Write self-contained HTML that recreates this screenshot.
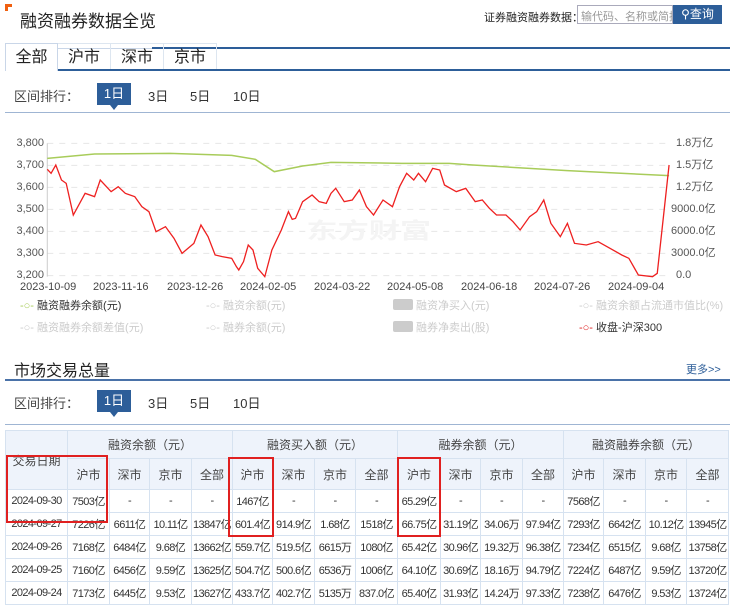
<!DOCTYPE html>
<html><head><meta charset="utf-8">
<style>
*{margin:0;padding:0;box-sizing:border-box}
body{width:740px;height:599px;overflow:hidden;background:#fff;font-family:"Liberation Sans","Noto Sans CJK SC",sans-serif;color:#333;position:relative}
.a{position:absolute;white-space:nowrap}
.btn1{position:absolute;background:#2d5e99;color:#fff;width:34px;height:22px;text-align:center;line-height:22px;font-size:13px}
.btn1:after{content:"";position:absolute;left:13px;bottom:-5px;border-left:4px solid transparent;border-right:4px solid transparent;border-top:5px solid #2d5e99}
.f13{font-size:13px}
table{position:absolute;left:5px;top:430px;border-collapse:collapse;font-size:11px;table-layout:fixed;width:723px}
td{border:1px solid #d6e2f0;text-align:center;height:23px;color:#333;padding:0;white-space:nowrap;overflow:hidden;letter-spacing:-0.6px}
tr.h td{background:#eef3fb;color:#444;font-size:12px;letter-spacing:0}
.rb{position:absolute;border:2px solid #e02020}
.lg{font-size:11px;color:#ccc}
</style></head><body>
<div class="a" style="left:5px;top:4px;width:7px;height:7px;border-left:3px solid #f06010;border-top:3px solid #f06010"></div>
<div class="a" style="left:20px;top:7px;font-size:17px;color:#222">融资融券数据全览</div>
<div class="a" style="left:5px;top:48px;width:147px;height:1px;background:#c9d6e8"></div>
<div class="a" style="left:152px;top:47px;width:578px;height:2px;background:#2d5e99"></div>
<div class="a" style="left:484px;top:9px;font-size:11px;color:#222">证券融资融券数据：</div>
<div class="a" style="left:577px;top:5px;width:96px;height:19px;border:1px solid #aab;font-size:11px;color:#999;padding:2px 3px;overflow:hidden">输代码、名称或简拼</div>
<div class="a" style="left:673px;top:5px;width:49px;height:19px;background:#2d5e99;color:#fff;font-size:12px;line-height:19px;text-align:center">&#9906;查询</div>
<div class="a" style="left:5px;top:43px;width:53px;height:28px;border:1px solid #c9d6e8;border-bottom:none;background:#fff;z-index:2;font-size:16px;text-align:center;line-height:27px;color:#222">全部</div>
<div class="a" style="left:58px;top:43px;width:53px;height:27px;border:1px solid #dde6f0;border-left:none;font-size:16px;text-align:center;line-height:27px;color:#222">沪市</div>
<div class="a" style="left:111px;top:43px;width:53px;height:27px;border:1px solid #dde6f0;border-left:none;font-size:16px;text-align:center;line-height:27px;color:#222">深市</div>
<div class="a" style="left:164px;top:43px;width:53px;height:27px;border:1px solid #dde6f0;border-left:none;font-size:16px;text-align:center;line-height:27px;color:#222">京市</div>
<div class="a" style="left:58px;top:69px;width:672px;height:2px;background:#2d5e99"></div>
<div class="a f13" style="left:14px;top:86px;color:#444">区间排行：</div>
<div class="btn1" style="left:97px;top:83px">1日</div>
<div class="a f13" style="left:148px;top:86px">3日</div>
<div class="a f13" style="left:190px;top:86px">5日</div>
<div class="a f13" style="left:233px;top:86px">10日</div>
<div class="a" style="left:5px;top:112px;width:725px;height:1px;background:#9fb5d3"></div>

<svg class="a" style="left:0;top:130px" width="740" height="160" viewBox="0 0 1565 480" preserveAspectRatio="none">
<g stroke="#e6e6e6" stroke-dasharray="6,6">
<line x1="100" x2="1415" y1="40" y2="40" vector-effect="non-scaling-stroke"/><line x1="100" x2="1415" y1="106" y2="106" vector-effect="non-scaling-stroke"/><line x1="100" x2="1415" y1="172" y2="172" vector-effect="non-scaling-stroke"/><line x1="100" x2="1415" y1="238" y2="238" vector-effect="non-scaling-stroke"/><line x1="100" x2="1415" y1="304" y2="304" vector-effect="non-scaling-stroke"/><line x1="100" x2="1415" y1="370" y2="370" vector-effect="non-scaling-stroke"/><line x1="100" x2="1415" y1="437" y2="437" vector-effect="non-scaling-stroke"/>
</g>
<line x1="100" x2="100" y1="40" y2="440" stroke="#ccc" vector-effect="non-scaling-stroke"/>
<text x="780" y="325" font-size="66" fill="#f4f4f4" text-anchor="middle" font-family="Noto Sans CJK SC,sans-serif" font-weight="bold">东方财富</text>
<polyline fill="none" stroke="#a8cc5a" stroke-width="1.5" vector-effect="non-scaling-stroke" points="100,85 200,72 360,70 490,76 540,88 580,125 640,108 700,97 850,100 950,100 1000,105 1200,122 1415,137"/>
<polyline fill="none" stroke="#ee2020" stroke-width="1.3" vector-effect="non-scaling-stroke" points="100,118 108,130 118,105 130,150 140,160 155,255 180,190 200,200 212,150 235,185 250,170 265,190 285,200 300,230 315,245 330,305 350,290 368,325 385,370 410,340 425,285 440,320 455,375 470,380 490,385 500,410 505,420 515,395 525,345 535,360 545,415 560,440 575,360 595,300 610,245 618,268 625,265 640,215 660,195 675,215 690,220 700,190 710,175 728,215 745,210 760,180 775,230 790,255 810,210 830,230 845,170 860,130 875,150 885,130 900,155 915,115 930,120 940,165 965,185 985,175 1005,215 1020,210 1035,235 1050,255 1070,255 1085,275 1100,300 1120,260 1135,245 1150,210 1165,280 1185,320 1200,280 1215,340 1240,345 1265,335 1290,355 1315,375 1330,385 1350,435 1380,440 1390,430 1400,300 1415,105"/>
</svg>
<div class="a" style="left:0;top:130px;width:44px;font-size:11px;color:#555;text-align:right;line-height:14px">
<div style="position:absolute;right:0;top:6px">3,800</div><div style="position:absolute;right:0;top:28px">3,700</div><div style="position:absolute;right:0;top:50px">3,600</div><div style="position:absolute;right:0;top:72px">3,500</div><div style="position:absolute;right:0;top:94px">3,400</div><div style="position:absolute;right:0;top:116px">3,300</div><div style="position:absolute;right:0;top:138px">3,200</div></div>
<div class="a" style="left:676px;top:130px;font-size:11px;color:#555;line-height:14px">
<div style="position:absolute;left:0;top:6px">1.8万亿</div><div style="position:absolute;left:0;top:28px">1.5万亿</div><div style="position:absolute;left:0;top:50px">1.2万亿</div><div style="position:absolute;left:-5px;top:72px">9000.0亿</div><div style="position:absolute;left:-5px;top:94px">6000.0亿</div><div style="position:absolute;left:-5px;top:116px">3000.0亿</div><div style="position:absolute;left:0;top:138px">0.0</div></div>
<div class="a" style="left:20px;top:281px;font-size:11px;color:#444">
<span class="a" style="left:0">2023-10-09</span><span class="a" style="left:73px">2023-11-16</span><span class="a" style="left:147px">2023-12-26</span><span class="a" style="left:220px">2024-02-05</span><span class="a" style="left:294px">2024-03-22</span><span class="a" style="left:367px">2024-05-08</span><span class="a" style="left:441px">2024-06-18</span><span class="a" style="left:514px">2024-07-26</span><span class="a" style="left:588px">2024-09-04</span></div>
<div class="a lg" style="left:20px;top:297px"><span style="color:#a8cc5a">-○-</span> <span style="color:#333">融资融券余额(元)</span></div>
<div class="a lg" style="left:206px;top:297px">-○- 融资余额(元)</div>
<div class="a lg" style="left:393px;top:297px"><span style="display:inline-block;width:20px;height:11px;background:#ccc;vertical-align:-1px;border-radius:2px"></span> 融资净买入(元)</div>
<div class="a lg" style="left:579px;top:297px">-○- 融资余额占流通市值比(%)</div>
<div class="a lg" style="left:20px;top:319px">-○- 融资融券余额差值(元)</div>
<div class="a lg" style="left:206px;top:319px">-○- 融券余额(元)</div>
<div class="a lg" style="left:393px;top:319px"><span style="display:inline-block;width:20px;height:11px;background:#ccc;vertical-align:-1px;border-radius:2px"></span> 融券净卖出(股)</div>
<div class="a lg" style="left:579px;top:319px"><span style="color:#e02020">-○-</span> <span style="color:#333">收盘-沪深300</span></div>

<div class="a" style="left:14px;top:357px;font-size:16px;color:#222">市场交易总量</div>
<div class="a" style="left:686px;top:361px;font-size:11px;color:#2d5e99">更多&gt;&gt;</div>
<div class="a" style="left:5px;top:379px;width:725px;height:2px;background:#4a72a8"></div>
<div class="a f13" style="left:14px;top:393px;color:#444">区间排行：</div>
<div class="btn1" style="left:97px;top:390px">1日</div>
<div class="a f13" style="left:148px;top:393px">3日</div>
<div class="a f13" style="left:190px;top:393px">5日</div>
<div class="a f13" style="left:233px;top:393px">10日</div>
<div class="a" style="left:5px;top:424px;width:725px;height:1px;background:#9fb5d3"></div>

<table>
<colgroup><col style="width:62px"><col style="width:42px"><col style="width:40px"><col style="width:42px"><col style="width:41px"><col style="width:40px"><col style="width:42px"><col style="width:41px"><col style="width:42px"><col style="width:43px"><col style="width:40px"><col style="width:42px"><col style="width:41px"><col style="width:40px"><col style="width:42px"><col style="width:41px"><col style="width:42px"></colgroup>
<tr class="h" style="height:28px"><td rowspan="2">交易日期</td><td colspan="4">融资余额（元）</td><td colspan="4">融资买入额（元）</td><td colspan="4">融券余额（元）</td><td colspan="4">融资融券余额（元）</td></tr>
<tr class="h" style="height:31px"><td>沪市</td><td>深市</td><td>京市</td><td>全部</td><td>沪市</td><td>深市</td><td>京市</td><td>全部</td><td>沪市</td><td>深市</td><td>京市</td><td>全部</td><td>沪市</td><td>深市</td><td>京市</td><td>全部</td></tr>
<tr><td>2024-09-30</td><td>7503亿</td><td>-</td><td>-</td><td>-</td><td>1467亿</td><td>-</td><td>-</td><td>-</td><td>65.29亿</td><td>-</td><td>-</td><td>-</td><td>7568亿</td><td>-</td><td>-</td><td>-</td></tr>
<tr><td>2024-09-27</td><td>7226亿</td><td>6611亿</td><td>10.11亿</td><td>13847亿</td><td>601.4亿</td><td>914.9亿</td><td>1.68亿</td><td>1518亿</td><td>66.75亿</td><td>31.19亿</td><td>34.06万</td><td>97.94亿</td><td>7293亿</td><td>6642亿</td><td>10.12亿</td><td>13945亿</td></tr>
<tr><td>2024-09-26</td><td>7168亿</td><td>6484亿</td><td>9.68亿</td><td>13662亿</td><td>559.7亿</td><td>519.5亿</td><td>6615万</td><td>1080亿</td><td>65.42亿</td><td>30.96亿</td><td>19.32万</td><td>96.38亿</td><td>7234亿</td><td>6515亿</td><td>9.68亿</td><td>13758亿</td></tr>
<tr><td>2024-09-25</td><td>7160亿</td><td>6456亿</td><td>9.59亿</td><td>13625亿</td><td>504.7亿</td><td>500.6亿</td><td>6536万</td><td>1006亿</td><td>64.10亿</td><td>30.69亿</td><td>18.16万</td><td>94.79亿</td><td>7224亿</td><td>6487亿</td><td>9.59亿</td><td>13720亿</td></tr>
<tr><td>2024-09-24</td><td>7173亿</td><td>6445亿</td><td>9.53亿</td><td>13627亿</td><td>433.7亿</td><td>402.7亿</td><td>5135万</td><td>837.0亿</td><td>65.40亿</td><td>31.93亿</td><td>14.24万</td><td>97.33亿</td><td>7238亿</td><td>6476亿</td><td>9.53亿</td><td>13724亿</td></tr>
</table>
<div class="rb" style="left:6px;top:455px;width:102px;height:68px"></div>
<div class="rb" style="left:228px;top:457px;width:46px;height:80px"></div>
<div class="rb" style="left:397px;top:457px;width:44px;height:80px"></div>
</body></html>
